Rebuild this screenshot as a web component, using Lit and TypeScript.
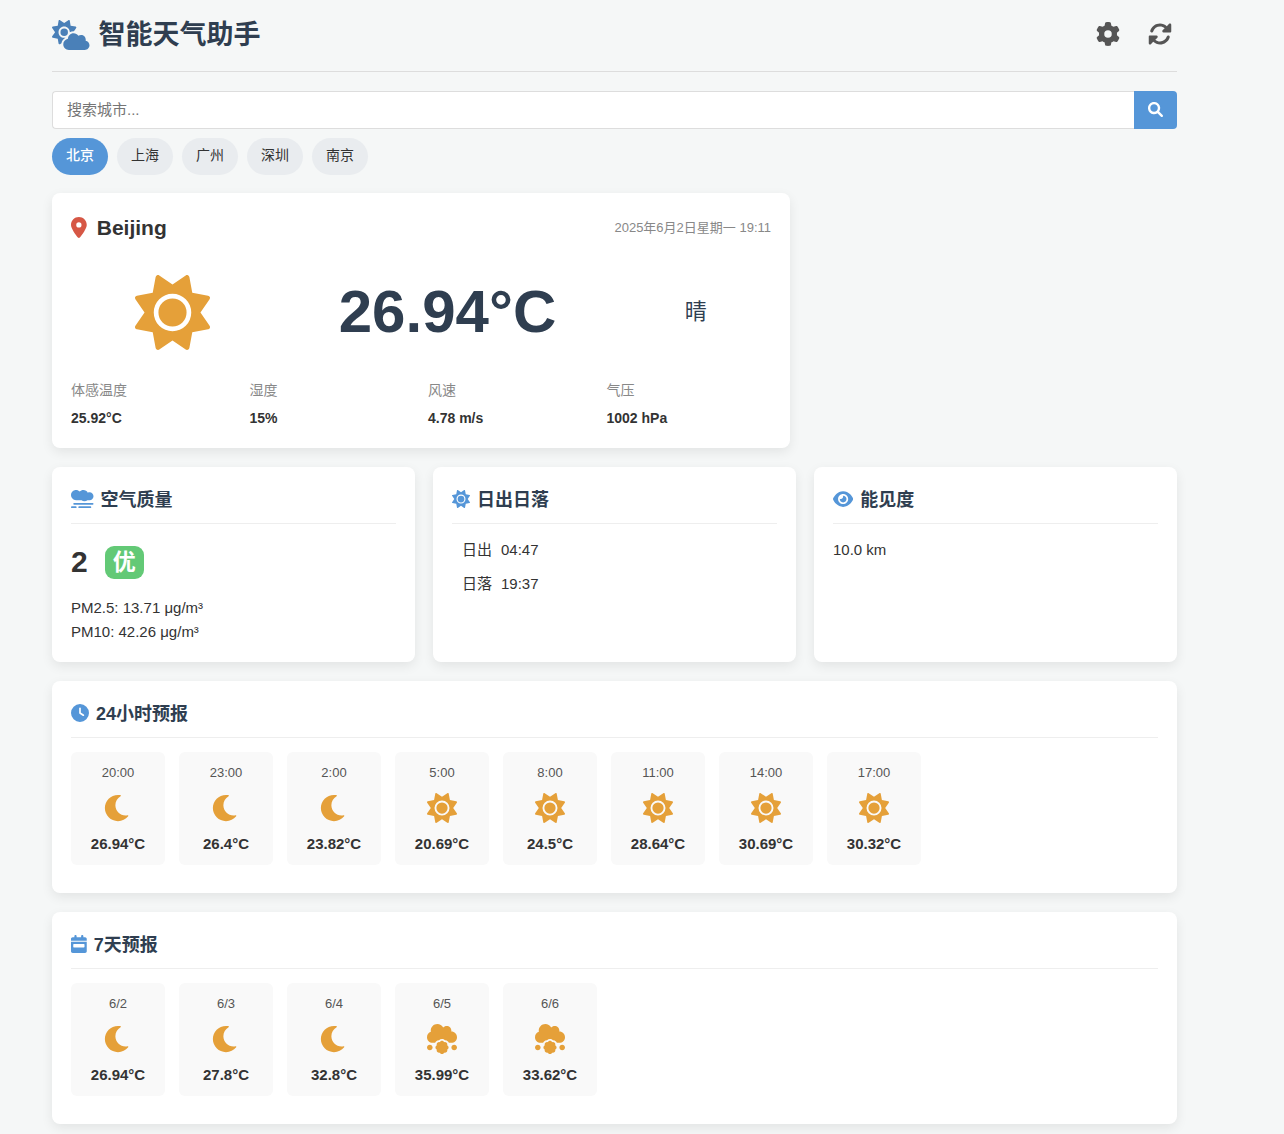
import { LitElement, html, svg, css } from "lit";
import { customElement, property, state } from "lit/decorators.js";
import { classMap } from "lit/directives/class-map.js";

interface Glyph {
  w: number;
  d: string;
}

const ICONS: Record<string, Glyph> = {
  "cloud-sun": {
    w: 640,
    d: "M294.2 1.2c5.1 2.1 8.7 6.7 9.6 12.1l14.1 84.7 84.7 14.1c5.4 .9 10 4.5 12.1 9.6s1.5 10.9-1.6 15.4l-38.5 55c-2.2-.1-4.4-.2-6.7-.2c-23.3 0-45.1 6.2-64 17.1l0-1.1c0-53-43-96-96-96s-96 43-96 96s43 96 96 96c8.1 0 15.9-1 23.4-2.9c-36.6 18.1-63.3 53.1-69.8 94.9l-24.4 17c-4.5 3.2-10.3 3.8-15.4 1.6s-8.7-6.7-9.6-12.1L98.1 317.9 13.4 303.8c-5.4-.9-10-4.5-12.1-9.6s-1.5-10.9 1.6-15.4L52.5 208 2.9 137.2c-3.2-4.5-3.8-10.3-1.6-15.4s6.7-8.7 12.1-9.6L98.1 98.1l14.1-84.7c.9-5.4 4.5-10 9.6-12.1s10.9-1.5 15.4 1.6L208 52.5 278.8 2.9c4.5-3.2 10.3-3.8 15.4-1.6zM144 208a64 64 0 1 1 128 0 64 64 0 1 1 -128 0zM639.9 431.9c0 44.2-35.8 80-80 80l-271.9 0c-53 0-96-43-96-96c0-47.6 34.6-87 80-94.6l0-1.3c0-53 43-96 96-96c34.9 0 65.4 18.6 82.2 46.4c13-9.1 28.8-14.4 45.8-14.4c44.2 0 80 35.8 80 80c0 5.9-.6 11.7-1.9 17.2c37.4 6.7 65.8 39.4 65.8 78.7z",
  },
  sun: {
    w: 512,
    d: "M361.5 1.2c5 2.1 8.6 6.6 9.6 11.9L391 121l107.9 19.8c5.3 1 9.8 4.6 11.9 9.6s1.5 10.7-1.6 15.2L446.9 256l62.3 90.3c3.1 4.5 3.7 10.2 1.6 15.2s-6.6 8.6-11.9 9.6L391 391 371.1 498.9c-1 5.3-4.6 9.8-9.6 11.9s-10.7 1.5-15.2-1.6L256 446.9l-90.3 62.3c-4.5 3.1-10.2 3.7-15.2 1.6s-8.6-6.6-9.6-11.9L121 391 13.1 371.1c-5.3-1-9.8-4.6-11.9-9.6s-1.5-10.7 1.6-15.2L65.1 256 2.8 165.7c-3.1-4.5-3.7-10.2-1.6-15.2s6.6-8.6 11.9-9.6L121 121 140.9 13.1c1-5.3 4.6-9.8 9.6-11.9s10.7-1.5 15.2 1.6L256 65.1 346.3 2.8c4.5-3.1 10.2-3.7 15.2-1.6zM160 256a96 96 0 1 1 192 0 96 96 0 1 1 -192 0zm224 0a128 128 0 1 0 -256 0 128 128 0 1 0 256 0z",
  },
  gear: {
    w: 512,
    d: "M495.9 166.6c3.2 8.7 .5 18.4-6.4 24.6l-43.3 39.4c1.1 8.3 1.7 16.8 1.7 25.4s-.6 17.1-1.7 25.4l43.3 39.4c6.9 6.2 9.6 15.9 6.4 24.6c-4.4 11.9-9.7 23.3-15.8 34.3l-4.7 8.1c-6.6 11-14 21.4-22.1 31.2c-5.9 7.2-15.7 9.6-24.5 6.8l-55.7-17.7c-13.4 10.3-28.2 18.9-44 25.4l-12.5 57.1c-2 9.1-9 16.3-18.2 17.8c-13.8 2.3-28 3.5-42.5 3.5s-28.7-1.2-42.5-3.5c-9.2-1.5-16.2-8.7-18.2-17.8l-12.5-57.1c-15.8-6.5-30.6-15.1-44-25.4L83.1 425.9c-8.8 2.8-18.6 .3-24.5-6.8c-8.1-9.8-15.5-20.2-22.1-31.2l-4.7-8.1c-6.1-11-11.4-22.4-15.8-34.3c-3.2-8.7-.5-18.4 6.4-24.6l43.3-39.4C64.6 273.1 64 264.6 64 256s.6-17.1 1.7-25.4L22.4 191.2c-6.9-6.2-9.6-15.9-6.4-24.6c4.4-11.9 9.7-23.3 15.8-34.3l4.7-8.1c6.6-11 14-21.4 22.1-31.2c5.9-7.2 15.7-9.6 24.5-6.8l55.7 17.7c13.4-10.3 28.2-18.9 44-25.4l12.5-57.1c2-9.1 9-16.3 18.2-17.8C227.3 1.2 241.5 0 256 0s28.7 1.2 42.5 3.5c9.2 1.5 16.2 8.7 18.2 17.8l12.5 57.1c15.8 6.5 30.6 15.1 44 25.4l55.7-17.7c8.8-2.8 18.6-.3 24.5 6.8c8.1 9.8 15.5 20.2 22.1 31.2l4.7 8.1c6.1 11 11.4 22.4 15.8 34.3zM256 336a80 80 0 1 0 0-160 80 80 0 1 0 0 160z",
  },
  rotate: {
    w: 512,
    d: "M449.9 39.96l-48.5 48.53C362.5 53.19 311.4 32 256 32C161.5 32 78.59 92.34 49.58 182.2c-5.438 16.81 3.797 34.88 20.61 40.28c16.89 5.5 34.88-3.812 40.3-20.59C130.9 138.5 189.4 96 256 96c37.96 0 73 14.18 100.2 37.8L311.1 178C295.1 194.8 306.8 223.4 330.4 224h146.9C487.7 223.7 496 215.3 496 204.9V59.04C496 34.99 466.9 22.95 449.9 39.96zM441.8 289.6c-16.84-5.438-34.88 3.812-40.3 20.59C381.1 373.5 322.6 416 256 416c-37.96 0-73-14.18-100.2-37.8L200 334C216.9 317.2 205.2 288.6 181.6 288H34.66C24.32 288.3 16 296.7 16 307.1v145.9c0 24.04 29.07 36.08 46.07 19.07l48.5-48.53C149.5 458.8 200.6 480 255.1 480c95.45 0 178.4-60.34 207.4-150.2C467.9 313 458.7 294.9 441.8 289.6z",
  },
  search: {
    w: 512,
    d: "M500.3 443.7l-119.7-119.7c27.22-40.41 40.65-90.9 33.46-144.7C401.8 87.79 326.8 13.32 235.2 1.723C99.01-15.51-15.51 99.01 1.724 235.2c11.6 91.64 86.08 166.7 177.6 178.9c53.8 7.189 104.3-6.236 144.7-33.46l119.7 119.7c15.62 15.62 40.95 15.62 56.57 0C515.9 484.7 515.9 459.3 500.3 443.7zM79.1 208c0-70.58 57.42-128 128-128s128 57.42 128 128c0 70.58-57.42 128-128 128S79.1 278.6 79.1 208z",
  },
  pin: {
    w: 384,
    d: "M215.7 499.2C267 435 384 279.4 384 192C384 86 298 0 192 0S0 86 0 192c0 87.4 117 243 168.3 307.2c12.3 15.3 35.1 15.3 47.4 0zM192 128a64 64 0 1 1 0 128 64 64 0 1 1 0-128z",
  },
  smog: {
    w: 640,
    d: "M144 288h156.1c22.5 19.7 51.6 32 83.9 32s61.3-12.3 83.9-32H528c61.9 0 112-50.1 112-112S589.9 64 528 64c-18 0-34.7 4.6-49.7 12.1C454 31 406.8 0 352 0c-41 0-77.8 17.3-104 44.8C221.8 17.3 185 0 144 0 64.5 0 0 64.5 0 144s64.5 144 144 144zM88 368H616a24 24 0 0 1 0 48H88a24 24 0 0 1 0-48zM24 464H136a24 24 0 0 1 0 48H24a24 24 0 0 1 0-48zM232 464H552a24 24 0 0 1 0 48H232a24 24 0 0 1 0-48z",
  },
  eye: {
    w: 576,
    d: "M279.6 160.4C282.4 160.1 285.2 160 288 160C341 160 384 202.1 384 256C384 309 341 352 288 352C234.1 352 192 309 192 256C192 253.2 192.1 250.4 192.4 247.6C201.7 252.1 212.5 256 224 256C259.3 256 288 227.3 288 192C288 180.5 284.1 169.7 279.6 160.4zM480.6 112.6C527.4 156 558.7 207.1 573.5 243.7C576.8 251.6 576.8 260.4 573.5 268.3C558.7 304 527.4 355.1 480.6 399.4C433.5 443.2 368.8 480 288 480C207.2 480 142.5 443.2 95.42 399.4C48.62 355.1 17.34 304 2.461 268.3C-.8205 260.4-.8205 251.6 2.461 243.7C17.34 207.1 48.62 156 95.42 112.6C142.5 68.84 207.2 32 288 32C368.8 32 433.5 68.84 480.6 112.6V112.6zM288 112C208.5 112 144 176.5 144 256C144 335.5 208.5 400 288 400C367.5 400 432 335.5 432 256C432 176.5 367.5 112 288 112z",
  },
  clock: {
    w: 512,
    d: "M256 0a256 256 0 1 1 0 512A256 256 0 1 1 256 0zM232 120l0 136c0 8 4 15.5 10.7 20l96 64c11 7.4 25.9 4.4 33.3-6.7s4.4-25.9-6.7-33.3L280 243.2 280 120c0-13.3-10.7-24-24-24s-24 10.7-24 24z",
  },
  calendar: {
    w: 448,
    d: "M128 0c17.7 0 32 14.3 32 32l0 32 128 0 0-32c0-17.7 14.3-32 32-32s32 14.3 32 32l0 32 48 0c26.5 0 48 21.5 48 48l0 48L0 160l0-48C0 85.5 21.5 64 48 64l48 0 0-32c0-17.7 14.3-32 32-32zM0 192l448 0 0 272c0 26.5-21.5 48-48 48L48 512c-26.5 0-48-21.5-48-48L0 192zm80 64c-8.8 0-16 7.2-16 16l0 64c0 8.8 7.2 16 16 16l288 0c8.8 0 16-7.2 16-16l0-64c0-8.8-7.2-16-16-16L80 256z",
  },
  moon: {
    w: 512,
    d: "M32 256c0-123.8 100.3-224 223.8-224c11.36 0 29.7 1.668 40.9 3.746c9.616 1.777 11.75 14.63 3.279 19.44C245 86.5 211.2 144.6 211.2 207.8c0 109.7 99.71 193 208.3 172.3c9.561-1.805 16.28 9.324 10.11 16.95C387.9 448.6 324.8 480 255.8 480C132.1 480 32 379.6 32 256z",
  },
  meatball: {
    w: 512,
    d: "M48 352c-26.5 0-48 21.5-48 48s21.5 48 48 48 48-21.5 48-48-21.5-48-48-48zm416 0c-26.5 0-48 21.5-48 48s21.5 48 48 48 48-21.5 48-48-21.5-48-48-48zm-119 11.1c4.6-14.5 1.6-30.8-9.8-42.3-11.5-11.5-27.8-14.4-42.3-9.9-7-13.5-20.7-23-36.9-23s-29.9 9.5-36.9 23c-14.5-4.6-30.8-1.6-42.3 9.9-11.5 11.5-14.4 27.8-9.9 42.3-13.5 7-23 20.7-23 36.9s9.5 29.9 23 36.9c-4.6 14.5-1.6 30.8 9.9 42.3 8.2 8.2 18.9 12.3 29.7 12.3 4.3 0 8.5-1.1 12.6-2.5 7 13.5 20.7 23 36.9 23s29.9-9.5 36.9-23c4.1 1.3 8.3 2.5 12.6 2.5 10.8 0 21.5-4.1 29.7-12.3 11.5-11.5 14.4-27.8 9.8-42.3 13.5-7 23-20.7 23-36.9s-9.5-29.9-23-36.9zM512 224c0-53-43-96-96-96-.6 0-1.1.2-1.6.2 1.1-5.2 1.6-10.6 1.6-16.2 0-44.2-35.8-80-80-80-24.6 0-46.3 11.3-61 28.8C256.4 24.8 219.3 0 176 0 114.1 0 64 50.1 64 112c0 7.3.8 14.3 2.1 21.2C27.8 145.8 0 181.5 0 224c0 53 43 96 96 96h43.4c3.6-8 8.4-15.4 14.8-21.8 13.5-13.5 31.5-21.1 50.8-21.3 13.5-13.2 31.7-20.9 51-20.9s37.5 7.7 51 20.9c19.3.2 37.3 7.8 50.8 21.3 6.4 6.4 11.3 13.8 14.8 21.8H416c53 0 96-43 96-96z",
  },
};

/** Monochrome glyph; its height comes from --icon-size, its width from the glyph's own ratio. */
@customElement("weather-icon")
export class WeatherIcon extends LitElement {
  @property() name = "sun";

  static styles = css`
    :host {
      display: inline-flex;
      flex: none;
    }
    .glyph {
      display: block;
      height: var(--icon-size, 18px);
      width: auto;
      fill: currentColor;
    }
  `;

  render() {
    const icon = ICONS[this.name];
    return html`<svg class="glyph" viewBox="0 0 ${icon.w} 512" aria-hidden="true">
      ${svg`<path d=${icon.d}></path>`}
    </svg>`;
  }
}

/** White panel with an icon, a heading and a rule above its content. */
@customElement("info-card")
export class InfoCard extends LitElement {
  @property() icon = "sun";
  @property() heading = "";

  static styles = css`
    :host {
      display: block;
      box-sizing: border-box;
      padding: 18px 19px;
      border-radius: 8px;
      background: #fff;
      box-shadow: 0 4px 12px rgba(0, 0, 0, 0.08);
    }
    .title {
      display: flex;
      align-items: center;
      gap: 7px;
      margin: 0 0 14px;
      padding-bottom: 7px;
      border-bottom: 1px solid #eee;
      font-size: 18px;
      line-height: 31px;
      font-weight: 700;
      color: #2f3e50;
    }
    .mark {
      padding-bottom: 4px;
      color: #5596d8;
    }
  `;

  render() {
    return html`
      <h2 class="title">
        <weather-icon class="mark" name=${this.icon}></weather-icon>${this.heading}
      </h2>
      <slot></slot>
    `;
  }
}

interface Forecast {
  when: string;
  icon: string;
  temp: string;
}

/** Row of small tiles: time or date, condition, temperature. */
@customElement("forecast-strip")
export class ForecastStrip extends LitElement {
  @property({ attribute: false }) items: Forecast[] = [];

  static styles = css`
    :host {
      display: block;
    }
    .strip {
      display: flex;
      gap: 14px;
      margin: 0;
      padding: 0 0 10px;
      list-style: none;
      overflow-x: auto;
    }
    .tile {
      display: flex;
      flex: none;
      flex-direction: column;
      align-items: center;
      box-sizing: border-box;
      width: 94px;
      padding: 9px;
      border-radius: 6px;
      background: #f9f9f9;
    }
    .when {
      font-size: 13px;
      line-height: 23px;
      color: #555;
    }
    .symbol {
      --icon-size: 30px;
      margin: 9px 0;
      color: #e5a039;
    }
    .temp {
      font-size: 15px;
      line-height: 24px;
      font-weight: 700;
      color: #333;
    }
  `;

  render() {
    return html`<ul class="strip">
      ${this.items.map(
        (s) => html`<li class="tile">
          <span class="when">${s.when}</span>
          <weather-icon class="symbol" name=${s.icon}></weather-icon>
          <span class="temp">${s.temp}</span>
        </li>`
      )}
    </ul>`;
  }
}

const CITIES = ["北京", "上海", "广州", "深圳", "南京"];

const DETAILS = [
  ["体感温度", "25.92°C"],
  ["湿度", "15%"],
  ["风速", "4.78 m/s"],
  ["气压", "1002 hPa"],
];

const HOURLY: Forecast[] = [
  { when: "20:00", icon: "moon", temp: "26.94°C" },
  { when: "23:00", icon: "moon", temp: "26.4°C" },
  { when: "2:00", icon: "moon", temp: "23.82°C" },
  { when: "5:00", icon: "sun", temp: "20.69°C" },
  { when: "8:00", icon: "sun", temp: "24.5°C" },
  { when: "11:00", icon: "sun", temp: "28.64°C" },
  { when: "14:00", icon: "sun", temp: "30.69°C" },
  { when: "17:00", icon: "sun", temp: "30.32°C" },
];

const DAILY: Forecast[] = [
  { when: "6/2", icon: "moon", temp: "26.94°C" },
  { when: "6/3", icon: "moon", temp: "27.8°C" },
  { when: "6/4", icon: "moon", temp: "32.8°C" },
  { when: "6/5", icon: "meatball", temp: "35.99°C" },
  { when: "6/6", icon: "meatball", temp: "33.62°C" },
];

@customElement("app-root")
export class AppRoot extends LitElement {
  @state() private city = "北京";

  static styles = css`
    :host {
      display: block;
      box-sizing: border-box;
      min-height: 100vh;
      padding: 14px 107px 9px 52px;
      background: #f5f7f7;
      color: #333;
      font-family: "Liberation Sans", "Noto Sans CJK SC", sans-serif;
      font-size: 15px;
      line-height: 24px;
    }
    .header {
      display: flex;
      align-items: center;
      justify-content: space-between;
      padding-bottom: 14px;
      border-bottom: 1px solid #ddd;
    }
    .brand {
      display: flex;
      align-items: center;
      gap: 9px;
      margin: 0;
      font-size: 27px;
      line-height: 43px;
      color: #2f3e50;
    }
    .logo {
      --icon-size: 30px;
      padding-bottom: 2px;
      color: #4a80b8;
    }
    .actions {
      display: flex;
      gap: 18px;
    }
    .action {
      display: flex;
      padding: 5px 5px 9px;
      border: 0;
      background: none;
      color: #555;
      cursor: pointer;
      --icon-size: 24px;
    }
    .search {
      display: flex;
      margin-top: 19px;
    }
    .field {
      flex: 1;
      min-width: 0;
      box-sizing: border-box;
      height: 38px;
      padding: 0 14px 2px;
      border: 1px solid #ddd;
      border-right: 0;
      border-radius: 4px 0 0 4px;
      background: #fff;
      color: #333;
      font: inherit;
    }
    .field::placeholder {
      color: #757575;
    }
    .go {
      display: flex;
      align-items: center;
      padding: 0 14px 2px;
      border: 0;
      border-radius: 0 4px 4px 0;
      background: #5596d8;
      color: #fff;
      cursor: pointer;
      --icon-size: 15px;
    }
    .cities {
      display: flex;
      flex-wrap: wrap;
      gap: 9px;
      margin: 9px 0 18px;
    }
    .city {
      padding: 6px 14px 8px;
      border: 0;
      border-radius: 19px;
      background: #e9ecef;
      color: #333;
      font: inherit;
      font-size: 14px;
      line-height: 23px;
      cursor: pointer;
    }
    .city.active {
      background: #5596d8;
      color: #fff;
      font-weight: 500;
    }
    .dashboard {
      display: grid;
      grid-template-columns: repeat(3, 1fr);
      gap: 19px 18px;
    }
    .pair {
      grid-column: 1 / -1;
      display: grid;
      grid-template-columns: 2fr 1fr;
      gap: 18px;
    }
    .wide {
      grid-column: 1 / -1;
    }
    .current {
      box-sizing: border-box;
      padding: 18px 19px;
      border-radius: 8px;
      background: #fff;
      box-shadow: 0 4px 12px rgba(0, 0, 0, 0.08);
    }
    .place {
      display: flex;
      align-items: center;
      justify-content: space-between;
    }
    .name {
      display: flex;
      align-items: center;
      gap: 10px;
      margin: 0;
      font-size: 21px;
      line-height: 34px;
      --icon-size: 21px;
    }
    .pin {
      padding-bottom: 2px;
      color: #d65745;
    }
    .date {
      font-size: 13px;
      color: #888;
    }
    .now {
      display: flex;
      align-items: center;
      justify-content: space-around;
      margin: 19px 0;
      color: #2f3e50;
    }
    .symbol {
      --icon-size: 75px;
      color: #e5a039;
    }
    .degrees {
      font-size: 60px;
      line-height: 96px;
      font-weight: 700;
    }
    .sky {
      font-size: 22px;
      line-height: 36px;
    }
    .details {
      display: grid;
      grid-template-columns: repeat(4, 1fr);
      gap: 14px;
      margin: 0;
      font-size: 14px;
      line-height: 23px;
    }
    .label {
      color: #888;
    }
    .value {
      margin: 5px 0 0;
      font-weight: 700;
    }
    .aqi {
      display: flex;
      align-items: center;
      gap: 17px;
      margin-bottom: 10px;
      font-size: 30px;
      line-height: 48px;
      font-weight: 700;
    }
    .badge {
      padding: 0 8px;
      border-radius: 9px;
      background: #63c976;
      color: #fff;
      font-size: 23px;
      line-height: 33px;
    }
    .line {
      margin: 0;
    }
    .times {
      display: grid;
      grid-template-columns: auto 1fr;
      gap: 10px 9px;
      margin: 0;
      padding: 0 10px;
    }
    .time {
      margin: 0;
    }
  `;

  render() {
    return html`
      <header class="header">
        <h1 class="brand">
          <weather-icon class="logo" name="cloud-sun"></weather-icon>智能天气助手
        </h1>
        <div class="actions">
          <button class="action" type="button" aria-label="设置">
            <weather-icon name="gear"></weather-icon>
          </button>
          <button class="action" type="button" aria-label="刷新">
            <weather-icon name="rotate"></weather-icon>
          </button>
        </div>
      </header>

      <form class="search" @submit=${(e: Event) => e.preventDefault()}>
        <input class="field" type="text" aria-label="搜索城市" placeholder="搜索城市..." />
        <button class="go" type="submit" aria-label="搜索">
          <weather-icon name="search"></weather-icon>
        </button>
      </form>

      <nav class="cities">
        ${CITIES.map(
          (c) => html`<button
            type="button"
            class=${classMap({ city: true, active: c === this.city })}
            @click=${() => (this.city = c)}
          >${c}</button>`
        )}
      </nav>

      <main class="dashboard">
        <div class="pair">
          <section class="current">
            <div class="place">
              <h2 class="name"><weather-icon class="pin" name="pin"></weather-icon>Beijing</h2>
              <span class="date">2025年6月2日星期一 19:11</span>
            </div>
            <div class="now">
              <weather-icon class="symbol" name="sun"></weather-icon>
              <span class="degrees">26.94°C</span>
              <span class="sky">晴</span>
            </div>
            <dl class="details">
              ${DETAILS.map(
                ([label, value]) => html`<div>
                  <dt class="label">${label}</dt>
                  <dd class="value">${value}</dd>
                </div>`
              )}
            </dl>
          </section>
        </div>

        <info-card icon="smog" heading="空气质量">
          <div class="aqi">2<span class="badge">优</span></div>
          <p class="line">PM2.5: 13.71 μg/m³</p>
          <p class="line">PM10: 42.26 μg/m³</p>
        </info-card>

        <info-card icon="sun" heading="日出日落">
          <dl class="times">
            <dt>日出</dt>
            <dd class="time">04:47</dd>
            <dt>日落</dt>
            <dd class="time">19:37</dd>
          </dl>
        </info-card>

        <info-card icon="eye" heading="能见度">
          <p class="line">10.0 km</p>
        </info-card>

        <info-card class="wide" icon="clock" heading="24小时预报">
          <forecast-strip .items=${HOURLY}></forecast-strip>
        </info-card>

        <info-card class="wide" icon="calendar" heading="7天预报">
          <forecast-strip .items=${DAILY}></forecast-strip>
        </info-card>
      </main>
    `;
  }
}
